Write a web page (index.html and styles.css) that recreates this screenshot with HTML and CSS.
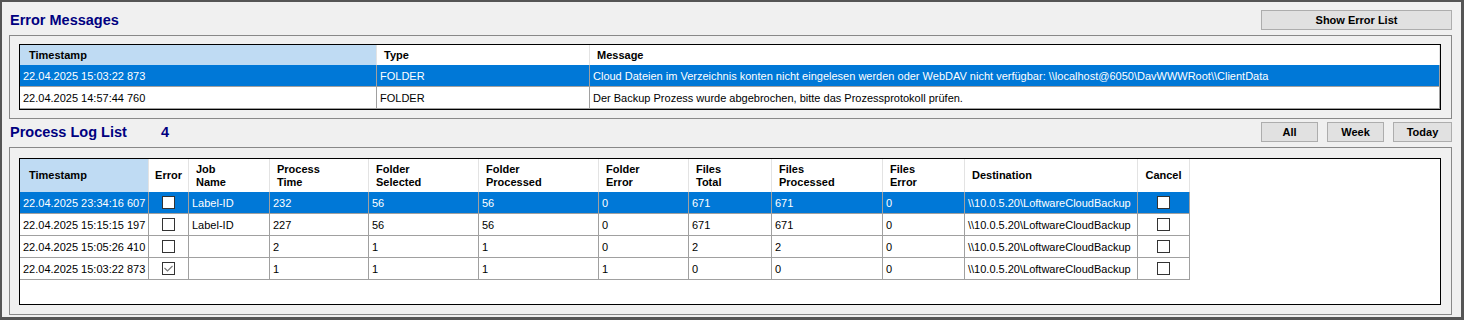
FILE: index.html
```html
<!DOCTYPE html>
<html>
    <head>
        <meta http-equiv="Content-Type" content="text/html; charset=utf-8">
        <title>Backup Monitor</title>
        <link rel="stylesheet" href="styles.css">
    </head>
    <body>
        <div class="window">
            <div class="section-head">
                <span class="title">Error Messages</span>
                <button class="btn btn-wide">Show Error List</button>
            </div>

            <div class="group group-errors">
                <div class="grid grid-errors">
                    <div class="row head">
                        <div class="hcell first sorted">Timestamp</div>
                        <div class="hcell">Type</div>
                        <div class="hcell">Message</div>
                    </div>
                    <div class="row selected">
                        <div class="cell">22.04.2025 15:03:22 873</div>
                        <div class="cell">FOLDER</div>
                        <div class="cell">Cloud Dateien im Verzeichnis konten nicht eingelesen werden oder WebDAV nicht verfügbar: \\localhost@6050\DavWWWRoot\\ClientData</div>
                    </div>
                    <div class="row">
                        <div class="cell">22.04.2025 14:57:44 760</div>
                        <div class="cell">FOLDER</div>
                        <div class="cell">Der Backup Prozess wurde abgebrochen, bitte das Prozessprotokoll prüfen.</div>
                    </div>
                </div>
            </div>

            <div class="section-head head-log">
                <span class="title title-log">Process Log List</span>
                <span class="title">4</span>
                <div class="filters">
                    <button class="btn btn-all">All</button>
                    <button class="btn btn-week">Week</button>
                    <button class="btn btn-today">Today</button>
                </div>
            </div>

            <div class="group group-log">
                <div class="grid grid-log">
                    <div class="row head">
                        <div class="hcell first sorted">Timestamp</div>
                        <div class="hcell center">Error</div>
                        <div class="hcell">Job<br>Name</div>
                        <div class="hcell">Process<br>Time</div>
                        <div class="hcell">Folder<br>Selected</div>
                        <div class="hcell">Folder<br>Processed</div>
                        <div class="hcell">Folder<br>Error</div>
                        <div class="hcell">Files<br>Total</div>
                        <div class="hcell">Files<br>Processed</div>
                        <div class="hcell">Files<br>Error</div>
                        <div class="hcell">Destination</div>
                        <div class="hcell center">Cancel</div>
                    </div>
                    <div class="row selected">
                        <div class="cell">22.04.2025 23:34:16 607</div>
                        <div class="cell center"><span class="check"></span></div>
                        <div class="cell">Label-ID</div>
                        <div class="cell">232</div>
                        <div class="cell">56</div>
                        <div class="cell">56</div>
                        <div class="cell">0</div>
                        <div class="cell">671</div>
                        <div class="cell">671</div>
                        <div class="cell">0</div>
                        <div class="cell">\\10.0.5.20\LoftwareCloudBackup</div>
                        <div class="cell center"><span class="check"></span></div>
                    </div>
                    <div class="row">
                        <div class="cell">22.04.2025 15:15:15 197</div>
                        <div class="cell center"><span class="check"></span></div>
                        <div class="cell">Label-ID</div>
                        <div class="cell">227</div>
                        <div class="cell">56</div>
                        <div class="cell">56</div>
                        <div class="cell">0</div>
                        <div class="cell">671</div>
                        <div class="cell">671</div>
                        <div class="cell">0</div>
                        <div class="cell">\\10.0.5.20\LoftwareCloudBackup</div>
                        <div class="cell center"><span class="check"></span></div>
                    </div>
                    <div class="row">
                        <div class="cell">22.04.2025 15:05:26 410</div>
                        <div class="cell center"><span class="check"></span></div>
                        <div class="cell"></div>
                        <div class="cell">2</div>
                        <div class="cell">1</div>
                        <div class="cell">1</div>
                        <div class="cell">0</div>
                        <div class="cell">2</div>
                        <div class="cell">2</div>
                        <div class="cell">0</div>
                        <div class="cell">\\10.0.5.20\LoftwareCloudBackup</div>
                        <div class="cell center"><span class="check"></span></div>
                    </div>
                    <div class="row">
                        <div class="cell">22.04.2025 15:03:22 873</div>
                        <div class="cell center">
                            <span class="check">
                                <svg width="11" height="11" viewBox="0 0 11 11">
                                    <polyline points="1.5,5 4.5,8 9.5,3" fill="none" stroke="#7a7a7a" stroke-width="1.2"/>
                                </svg>
                            </span>
                        </div>
                        <div class="cell"></div>
                        <div class="cell">1</div>
                        <div class="cell">1</div>
                        <div class="cell">1</div>
                        <div class="cell">1</div>
                        <div class="cell">0</div>
                        <div class="cell">0</div>
                        <div class="cell">0</div>
                        <div class="cell">\\10.0.5.20\LoftwareCloudBackup</div>
                        <div class="cell center"><span class="check"></span></div>
                    </div>
                </div>
            </div>
        </div>
    </body>
</html>
```

FILE: styles.css
```css
body {
    margin: 0;
    background: #f0f0f0;
    font-family: "Liberation Sans", Arial, sans-serif;
    font-size: 11px;
    color: #000;
}

* {
    box-sizing: border-box;
}

.window {
    width: 1464px;
    height: 320px;
    border: solid #555;
    border-width: 2px 3px 3px 2px;
    padding: 8px 9px 0 7px;
}

.section-head {
    display: flex;
    align-items: center;
    height: 20px;
}

.head-log {
    margin-top: 3px;
}

.title {
    color: #000080;
    font-size: 14.5px;
    font-weight: bold;
    padding-left: 1px;
}

.title-log {
    width: 151px;
}

.btn {
    height: 20px;
    margin: 0;
    padding: 0;
    border: 1px solid #adadad;
    background: #e1e1e1;
    font-family: inherit;
    font-size: 11px;
    font-weight: bold;
    color: #000;
}

.btn-wide {
    width: 191px;
    margin-left: auto;
}

.filters {
    display: flex;
    gap: 9px;
    margin-left: auto;
}

.btn-all, .btn-week {
    width: 57px;
}

.btn-today {
    width: 59px;
}

.group {
    border: 1px solid #888;
    margin-top: 5px;
    padding: 8px 10px 8px 9px;
}

.group-log {
    padding: 10px 10px 9px 9px;
}

.grid {
    border: 1px solid #000;
    background: #fff;
    overflow: hidden;
}

.grid-errors {
    height: 66px;
}

.grid-log {
    height: 147px;
}

.row {
    display: grid;
    height: 22px;
}

.grid-errors .row {
    grid-template-columns: 357px 213px 1fr;
}

.grid-log .row {
    grid-template-columns: 129px 40px 81px 99px 110px 120px 90px 83px 111px 82px 173px 52px;
}

.grid-errors .head {
    height: 20px;
}

.grid-log .head {
    height: 33px;
}

.hcell {
    display: flex;
    align-items: center;
    padding-left: 7px;
    border-right: 1px solid #e3e3e3;
    font-weight: bold;
    line-height: 13px;
}

.hcell.first {
    padding-left: 9px;
}

.hcell.center {
    justify-content: center;
    padding-left: 0;
}

.sorted {
    background: #bfdbf3;
}

.cell {
    display: flex;
    align-items: center;
    padding: 0 3px;
    border-right: 1px solid #a0a0a0;
    border-bottom: 1px solid #a0a0a0;
    white-space: nowrap;
    overflow: hidden;
}

.cell.center {
    justify-content: center;
    padding: 0;
}

.selected .cell {
    background: #0078d7;
    color: #fff;
}

.check {
    display: flex;
    width: 13px;
    height: 13px;
    border: 1px solid #333;
    background: #fff;
}
```
